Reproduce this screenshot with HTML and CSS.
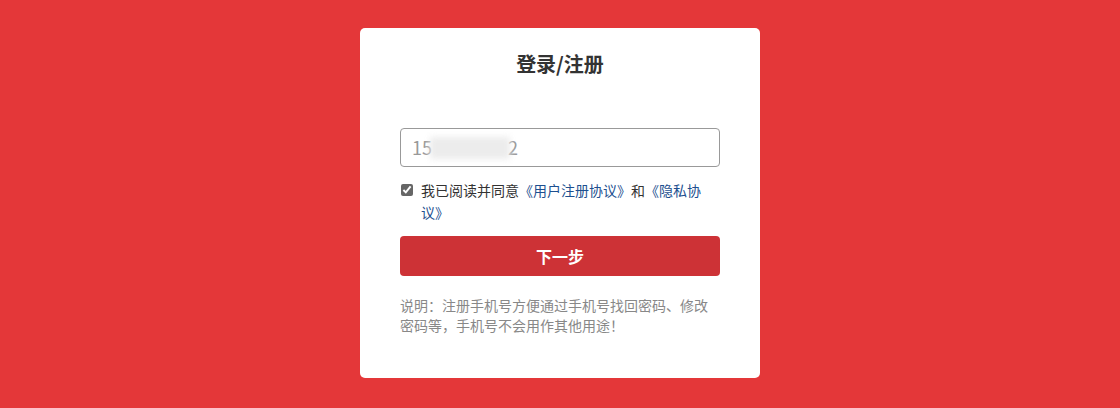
FILE: index.html
```html
<!DOCTYPE html>
<html lang="zh-CN">
<head>
    <meta charset="UTF-8">
    <meta name="viewport" content="width=device-width, initial-scale=1.0">
    <title>登录/注册</title>
    <link rel="stylesheet" href="styles.css">
</head>
<body>
    <div class="login-box">
        <h2 class="login-title">登录/注册</h2>
        <div class="phone-input">15<span class="masked"></span>2</div>
        <label class="agree">
            <input type="checkbox" checked>
            <span class="agree-text">我已阅读并同意<a href="#">《用户注册协议》</a>和<a href="#">《隐私协议》</a></span>
        </label>
        <button class="next-btn">下一步</button>
        <p class="note">说明：注册手机号方便通过手机号找回密码、修改密码等，手机号不会用作其他用途！</p>
    </div>
</body>
</html>
```

FILE: styles.css
```css
* {
    margin: 0;
    padding: 0;
    box-sizing: border-box;
}
body {
    background: #e43739;
    font-family: "Noto Sans CJK SC", "Liberation Sans", sans-serif;
    padding-top: 28px;
}
.login-box {
    width: 400px;
    height: 350px;
    margin: 0 auto;
    background: #fff;
    border-radius: 5px;
    padding: 22px 40px 0;
}
.login-title {
    font-size: 20px;
    line-height: 28px;
    font-weight: bold;
    color: #333;
    text-align: center;
}
.phone-input {
    margin-top: 50px;
    height: 39px;
    border: 1px solid #999;
    border-radius: 4px;
    padding: 0 11px;
    font-size: 18px;
    line-height: 37px;
    color: #999;
    display: flex;
    align-items: center;
}
.masked {
    display: inline-block;
    width: 80px;
    height: 22px;
    background: #ececec;
    filter: blur(3px);
    margin: 0 -2px;
}
.agree {
    margin-top: 12px;
    display: flex;
    align-items: flex-start;
    font-size: 14px;
    line-height: 22px;
    color: #333;
}
.agree input {
    width: 12px;
    height: 12px;
    margin: 5px 8px 0 1px;
    accent-color: #666;
}
.agree-text {
    width: 290px;
}
.agree-text a {
    color: #1d4f8f;
    text-decoration: none;
}
.next-btn {
    display: block;
    width: 100%;
    height: 40px;
    margin-top: 13px;
    border: none;
    border-radius: 4px;
    background: #cd3236;
    color: #fff;
    font-family: inherit;
    font-size: 16px;
    font-weight: bold;
    cursor: pointer;
}
.note {
    margin-top: 19px;
    font-size: 14px;
    line-height: 20px;
    color: #888;
}
```
